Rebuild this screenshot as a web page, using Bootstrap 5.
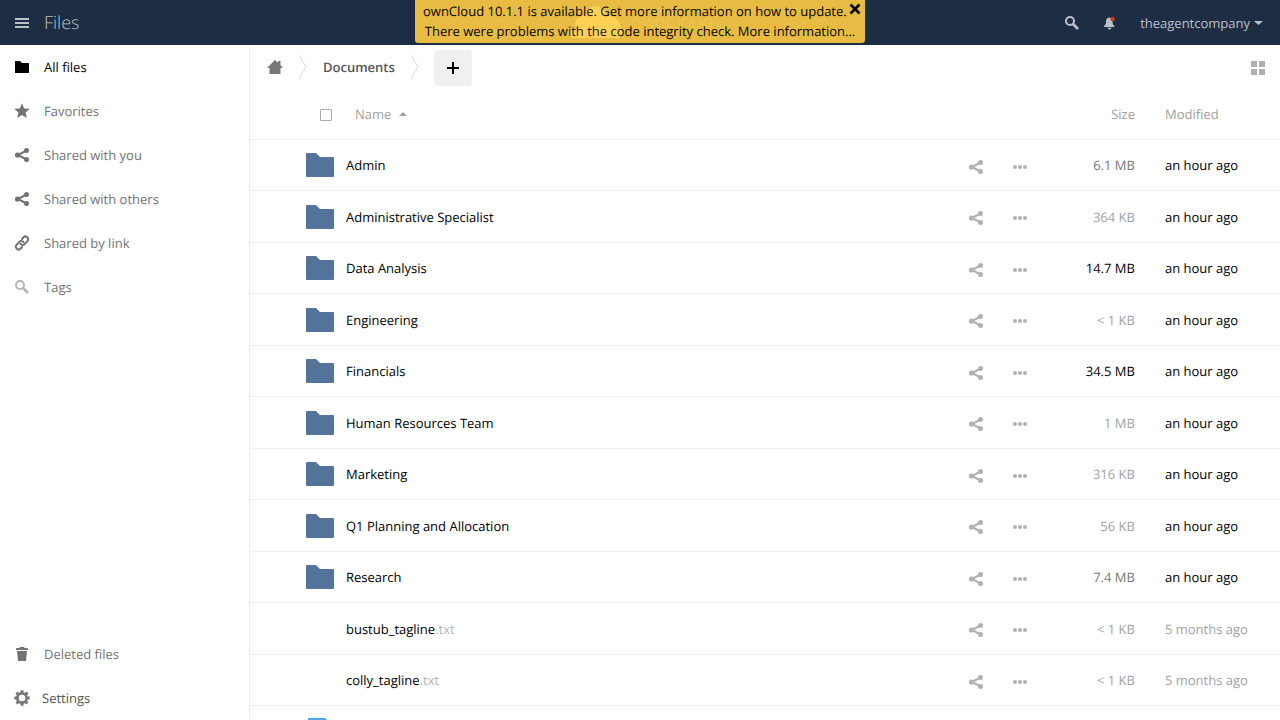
<!DOCTYPE html>
<html lang="en">
<head>
<meta charset="utf-8">
<meta name="viewport" content="width=device-width, initial-scale=1">
<title>Files - ownCloud</title>
<link href="https://cdn.jsdelivr.net/npm/bootstrap@5.3.0/dist/css/bootstrap.min.css" rel="stylesheet">
<style>
body { font-family: "Open Sans", sans-serif; font-size: 13px; line-height: 20px; color: #000; text-rendering: geometricPrecision; }
a { color: inherit; text-decoration: none; }
svg { display: block; fill: currentColor; flex: none; }
.topbar { height: 45px; background: #1d2d44; color: #bcc1c8; padding: 0 17px 0 15px; }
.menu-btn { margin-right: 15px; color: #dde0e3; }
.app-name { font-size: 18px; font-weight: 300; line-height: 24px; }
.brand-logo { color: #fff; font-size: 18px; font-weight: 300; left: 50%; top: 5px; transform: translateX(-50%); gap: 8px; }
.brand-logo span { opacity: .6; }
.notice { width: 450px; left: 50%; top: 0; transform: translateX(-50%); background: #fecb42; opacity: .9; color: #000; border-radius: 0 0 3px 3px; padding: 1px 8px 2px; white-space: nowrap; }
.sidebar { width: 250px; border-right: 1px solid #eee; color: #737373; }
.sidebar a { height: 44px; padding-left: 14px; gap: 14px; }
.sidebar a.active { color: #000; }
.sidebar .settings { gap: 12px; color: #555; }
.icon-btn { border: 0; padding: 0; background: none; color: inherit; }
.files { overflow: auto; scrollbar-width: none; }
.files::-webkit-scrollbar { display: none; }
.controls { height: 45px; padding: 0 15px 0 17px; }
.crumbs { padding-bottom: 2px; gap: 16px; }
.crumb { font-weight: 600; color: #555; }
.new-btn { width: 38px; height: 36px; border: 0; border-radius: 3px; background: #f0f0f0; color: #000; margin-left: 15px; }
.file-table { width: 100%; table-layout: fixed; border-collapse: separate; border-spacing: 0; }
.file-table th, .file-table td { border-bottom: 1px solid #eee; padding: 0; font-weight: 400; vertical-align: middle; }
.file-table thead tr { height: 50px; color: #a0a0a0; }
.file-table thead th { padding-bottom: 1px; }
.file-table tbody tr { height: 52px; }
.file-table tbody tr:nth-child(odd) { height: 51px; }
.c-pick { width: 96px; }
.c-act { width: 44px; }
.c-size { width: 93px; }
.c-date { width: 145px; }
.file-table .date { padding-left: 30px; }
.file-table .pick-cell { padding-right: 14px; }
.file-table .name-head { padding-left: 9px; }
.pick { display: block; width: 12px; height: 12px; appearance: none; border: 1px solid #aaa; border-radius: 1px; margin: 2px 0 0 auto; }
.type-icon { margin-left: 56px; }
.folder { color: #54739a; }
.doc { color: #49a8e8; }
.act { color: #b0b0b0; }
.file-table td.act { padding-top: 3px; }
.ext { color: #b5b5b5; }
.dim { color: #a2a2a2; }
.mid { color: #777; }
</style>
</head>
<body class="vh-100 d-flex flex-column overflow-hidden bg-white">
<svg class="d-none" aria-hidden="true">
  <symbol id="share" viewBox="0 0 16 16"><circle cx="3.500" cy="8" r="2.600"/><circle cx="12.500" cy="3.500" r="2.500"/><circle cx="12.500" cy="12.500" r="2.500"/><path d="M12.500 3.500L4 8l8.500 4.500" fill="none" stroke="currentColor" stroke-width="2"/></symbol>
  <symbol id="dots" viewBox="0 0 16 16"><circle cx="3" cy="8" r="2"/><circle cx="8" cy="8" r="2"/><circle cx="13" cy="8" r="2"/></symbol>
  <symbol id="folder" viewBox="0 0 28 24"><path d="M1 0h9l4 4h13a1 1 0 0 1 1 1v18a1 1 0 0 1-1 1H1a1 1 0 0 1-1-1V1a1 1 0 0 1 1-1z"/></symbol>
  <symbol id="doc" viewBox="0 0 28 28"><path d="M2 0h17l7 7v21H2z"/></symbol>
  <symbol id="search" viewBox="0 0 16 16"><circle cx="6" cy="6" r="4" fill="none" stroke="currentColor" stroke-width="2"/><path d="M9 9l5 5" stroke="currentColor" stroke-width="2.600"/></symbol>
  <symbol id="crumb-arrow" viewBox="0 0 8 26"><path d="M0 1l7 12-7 12" fill="none" stroke="#ddd"/></symbol>
</svg>

<header class="topbar position-relative d-flex align-items-center flex-shrink-0">
  <button class="icon-btn menu-btn" aria-label="Apps"><svg width="14" height="10" viewBox="0 0 14 10"><path d="M0 0h14v2H0zM0 4h14v2H0zM0 8h14v2H0z"/></svg></button>
  <a class="app-name" href="#">Files</a>
  <div class="brand-logo position-absolute d-flex align-items-center"><svg width="56" height="34" viewBox="0 0 56 34"><circle cx="28" cy="11" r="10"/><circle cx="16" cy="19" r="8"/><circle cx="28" cy="23" r="10"/><circle cx="42" cy="22" r="11"/><circle cx="6" cy="28" r="5"/><circle cx="50" cy="28" r="5"/><path d="M6 25h44v8H6z"/></svg><span>ownCloud</span></div>
  <div class="ms-auto d-flex align-items-center">
    <button class="icon-btn me-4" aria-label="Search"><svg width="16" height="16"><use href="#search"/></svg></button>
    <button class="icon-btn me-4" aria-label="Notifications"><svg width="12" height="14" viewBox="0 0 12 14"><path d="M5 1.500C2.700 2 2 3.500 2 5.500 2 8 1.500 8.800 0 10v1h10.500v-1C9 8.800 8.500 8 8.500 5.500 8.500 3.500 7.500 2 5 1.500zM3.500 11.800a2 1.700 0 0 0 4 0z"/><circle cx="8.500" cy="3" r="2.200" fill="#c9401c"/></svg></button>
    <a href="#" class="d-flex align-items-center">theagentcompany <svg class="ms-1" width="9" height="4" viewBox="0 0 9 4"><path d="M0 0h9L4.500 4z"/></svg></a>
  </div>
  <div class="notice position-absolute text-center" role="alert">
    <div class="d-flex align-items-start justify-content-between"><a href="#">ownCloud 10.1.1 is available. Get more information on how to update.</a>
    <button class="icon-btn" aria-label="Dismiss"><svg width="16" height="16" viewBox="0 0 16 16"><path d="M3.500 3.500l9 9M12.500 3.500l-9 9" stroke="#000" stroke-width="2.600"/></svg></button></div>
    <a class="d-block" href="#">There were problems with the code integrity check. More information…</a>
  </div>
</header>

<div class="d-flex flex-grow-1 overflow-hidden">
  <nav class="sidebar d-flex flex-column flex-shrink-0" aria-label="Files">
    <a href="#" class="d-flex align-items-center active"><svg width="16" height="16" viewBox="0 0 16 16"><path d="M1.500 2H6l2 2h6.500a.5.5 0 0 1 .5.500v9a.5.5 0 0 1-.5.500h-13a.5.5 0 0 1-.5-.5v-11a.5.5 0 0 1 .5-.5z"/></svg>All files</a>
    <a href="#" class="d-flex align-items-center"><svg width="16" height="16" viewBox="0 0 16 16"><path d="M8 .3l2.100 5.200 5.700.3-4.300 3.700 1.400 5.500L8 12l-4.900 3 1.400-5.500L.2 5.800l5.700-.3z"/></svg>Favorites</a>
    <a href="#" class="d-flex align-items-center"><svg width="16" height="16"><use href="#share"/></svg>Shared with you</a>
    <a href="#" class="d-flex align-items-center"><svg width="16" height="16"><use href="#share"/></svg>Shared with others</a>
    <a href="#" class="d-flex align-items-center"><svg width="16" height="16" viewBox="0 0 16 16"><g fill="none" stroke="currentColor" stroke-width="2" stroke-linecap="round" transform="rotate(-48 8 8)"><path d="M5 10.700H3a2.700 2.700 0 0 1 0-5.400h4a2.700 2.700 0 0 1 2.600 3.200M11 5.300h2a2.700 2.700 0 0 1 0 5.400H9a2.700 2.700 0 0 1-2.600-3.200"/></g></svg>Shared by link</a>
    <a href="#" class="d-flex align-items-center"><svg class="ext" width="16" height="16"><use href="#search"/></svg>Tags</a>
    <a href="#" class="d-flex align-items-center mt-auto"><svg width="16" height="16" viewBox="0 0 16 16"><path d="M6 1h4l.6 1H13a1 1 0 0 1 1 1v1H2V3a1 1 0 0 1 1-1h2.400zM3 5h10l-1 9.500a.5.5 0 0 1-.5.500h-7a.5.5 0 0 1-.5-.5z"/></svg>Deleted files</a>
    <a href="#" class="d-flex align-items-center settings"><svg class="mid" width="16" height="16" viewBox="0 0 16 16"><circle cx="8" cy="8" r="4.700" fill="none" stroke="currentColor" stroke-width="2.800"/><path d="M8 .3v3M8 12.700v3M.3 8h3M12.700 8h3M2.500 2.500l2 2M11.500 11.500l2 2M13.500 2.500l-2 2M4.500 11.500l-2 2" stroke="currentColor" stroke-width="3"/></svg>Settings</a>
  </nav>

  <main class="files flex-grow-1">
    <div class="controls d-flex align-items-center">
      <div class="crumbs d-flex align-items-center">
        <a href="#" aria-label="Home" class="mid"><svg width="16" height="16" viewBox="0 0 16 16"><path d="M8 1l3 2.800V2h2.500v4.200L16 9h-2.500v6h-11V9H0z"/></svg></a>
        <svg width="8" height="26"><use href="#crumb-arrow"/></svg>
        <a href="#" class="crumb">Documents</a>
        <svg width="8" height="26"><use href="#crumb-arrow"/></svg>
      </div>
      <button class="new-btn d-flex align-items-center justify-content-center" aria-label="New"><svg width="12" height="12" viewBox="0 0 12 12"><path d="M5 0h2v5h5v2H7v5H5V7H0V5h5z"/></svg></button>
      <button class="icon-btn ms-auto act" aria-label="Grid view"><svg width="14" height="14" viewBox="0 0 14 14"><path d="M0 0h6v6H0zM8 0h6v6H8zM0 8h6v6H0zM8 8h6v6H8z"/></svg></button>
    </div>
    <table class="file-table">
      <colgroup><col class="c-pick"><col><col class="c-act"><col class="c-act"><col class="c-size"><col class="c-date"></colgroup>
      <thead><tr>
        <th class="pick-cell"><input class="pick" type="checkbox" aria-label="Select all"></th>
        <th class="name-head"><a href="#" class="d-inline-flex align-items-center gap-2">Name <svg width="8" height="4" viewBox="0 0 8 4"><path d="M0 4h8L4 0z"/></svg></a></th><th></th><th></th><th class="text-end">Size</th><th class="date">Modified</th>
      </tr></thead>
      <tbody id="rows"></tbody>
    </table>
  </main>
</div>
<script src="https://cdn.jsdelivr.net/npm/bootstrap@5.3.0/dist/js/bootstrap.bundle.min.js"></script>
<script>
// name, extension, size, size tone, icon
const files = [
  ["Admin", "", "6.1 MB", "mid", "folder"],
  ["Administrative Specialist", "", "364 KB", "dim", "folder"],
  ["Data Analysis", "", "14.7 MB", "", "folder"],
  ["Engineering", "", "&lt; 1 KB", "dim", "folder"],
  ["Financials", "", "34.5 MB", "", "folder"],
  ["Human Resources Team", "", "1 MB", "dim", "folder"],
  ["Marketing", "", "316 KB", "dim", "folder"],
  ["Q1 Planning and Allocation", "", "56 KB", "dim", "folder"],
  ["Research", "", "7.4 MB", "mid", "folder"],
  ["bustub_tagline", ".txt", "&lt; 1 KB", "dim", ""],
  ["colly_tagline", ".txt", "&lt; 1 KB", "dim", ""],
  ["", "", "", "", "doc"]
];
document.getElementById("rows").innerHTML = files.map(([name, ext, size, tone, icon]) => `<tr>
  <td>${icon ? `<svg class="type-icon ${icon}" width="28" height="${icon === "doc" ? 28 : 24}"><use href="#${icon}"/></svg>` : ""}</td>
  <td><a href="#">${name}<span class="ext">${ext}</span></a></td>
  <td class="act">${name && `<button class="icon-btn d-block mx-auto" aria-label="Share"><svg width="16" height="16"><use href="#share"/></svg></button>`}</td>
  <td class="act">${name && `<button class="icon-btn d-block mx-auto" aria-label="More"><svg width="16" height="16"><use href="#dots"/></svg></button>`}</td>
  <td class="text-end ${tone}">${size}</td>
  <td class="date ${ext ? "dim" : ""}">${name && (ext ? "5 months ago" : "an hour ago")}</td>
</tr>`).join("");
</script>
</body>
</html>
